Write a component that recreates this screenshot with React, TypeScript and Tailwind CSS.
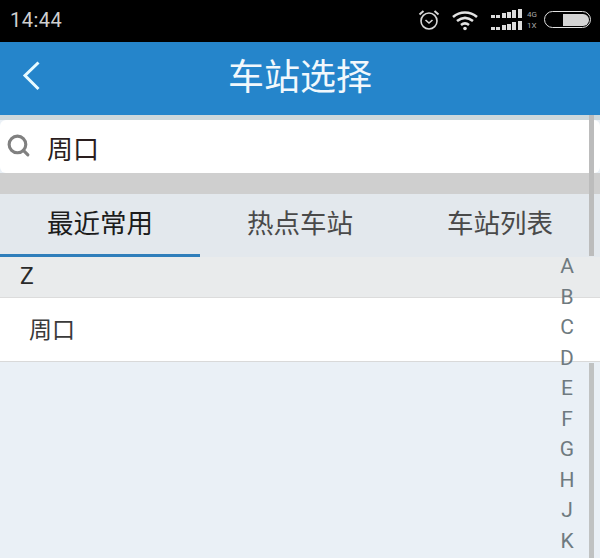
import { Search } from "lucide-react";

const cjk = "font-['Roboto','Noto_Sans_CJK_SC',sans-serif]";
const letters = ["A", "B", "C", "D", "E", "F", "G", "H", "J", "K"];
const tabs = ["最近常用", "热点车站", "车站列表"];

function SignalBars() {
  return (
    <svg width="32" height="9" viewBox="0 0 32 9" fill="#dcdcdc">
      <rect x="0" y="6" width="4" height="3" />
      <rect x="5" y="6" width="4" height="3" />
      <rect x="11" y="4" width="4" height="5" />
      <rect x="16" y="3" width="4" height="6" />
      <rect x="21" y="1" width="4" height="8" />
      <rect x="27" y="0" width="4" height="9" />
    </svg>
  );
}

function StatusBar() {
  return (
    <div className="h-[42px] bg-black flex items-center justify-between pl-[10px] pr-[9px] font-['Roboto',sans-serif] text-[#cfcfcf]">
      <span className="text-[20px] tracking-[0.5px] -mt-[2px]">14:44</span>
      <div className="flex items-center -mt-[3px]">
        {/* alarm */}
        <svg width="24" height="24" viewBox="0 0 24 24" fill="none" stroke="#d8d8d8" strokeWidth="1.6" className="-ml-[2px]">
          <circle cx="12" cy="13" r="8" />
          <path d="M8.5 12l3.5 3 3.5-3" />
          <path d="M2.5 6.5L6.5 3M21.5 6.5L17.5 3" strokeWidth="2" />
        </svg>
        {/* wifi */}
        <svg width="28" height="22" viewBox="0 0 28 22" fill="none" stroke="#e2e2e2" strokeWidth="2.6" className="ml-[10px]">
          <path d="M2 8c7-6 17-6 24 0" />
          <path d="M6 12c5-4 11-4 16 0" />
          <path d="M10 16c2.500-2 5.500-2 8 0" />
          <circle cx="14" cy="19.500" r="1.800" fill="#e2e2e2" stroke="none" />
        </svg>
        <div className="flex flex-col gap-[3px] ml-[12px]">
          <SignalBars />
          <SignalBars />
        </div>
        <div className="flex flex-col text-[8px] leading-[11px] ml-[4px] w-[14px] text-[#a8a8a8]">
          <span>4G</span>
          <span>1X</span>
        </div>
        {/* battery */}
        <div className="ml-[3px] w-[47px] h-[17px] rounded-full border-[1.5px] border-[#e2e2e2] flex justify-end p-[1.500px]">
          <div className="w-[26px] h-full rounded-r-full bg-[#d4d4d4]" />
        </div>
      </div>
    </div>
  );
}

export default function App() {
  return (
    <div className={`relative w-[600px] h-[558px] overflow-hidden bg-[#eaf0f6] ${cjk}`}>
      <StatusBar />

      <header className="h-[73px] bg-[#2585cb] flex items-center justify-center relative">
        <svg
          width="20"
          height="30"
          viewBox="0 0 20 30"
          fill="none"
          stroke="#e8fbff"
          strokeWidth="3"
          className="absolute left-[22px] top-[19px]"
        >
          <path d="M16.500 1.500L3 14.500L16.500 28" />
        </svg>
        <h1 className="text-[36px] text-[#f2f8fc] -mt-[1px]">车站选择</h1>
      </header>

      <div className="h-[5px] bg-[#cdd8dc]" />
      <div className="h-[53px] bg-white rounded-[6px] flex items-center pl-[6px]">
        <Search className="w-[25px] h-[25px] text-[#808080] -mt-[2px]" strokeWidth={3} />
        <span className="ml-[16px] text-[26px] text-[#2a1e1e] mt-[8px]">周口</span>
      </div>
      <div className="h-[21px] bg-[#cfcfcf]" />

      <nav className="flex h-[63px] bg-[#e3e8ed]">
        {tabs.map((tab, i) => (
          <div
            key={tab}
            className={
              i === 0
                ? "flex-1 flex items-center justify-center text-[26.500px] text-[#1c1c1c] border-b-[3px] border-[#2f7ebb]"
                : "flex-1 flex items-center justify-center text-[26.500px] text-[#4a4a4a] pb-[3px]"
            }
          >
            {tab}
          </div>
        ))}
      </nav>

      <div className="h-[41px] bg-[#e9ebec] flex items-center pl-[20px] text-[23px] text-[#2a2a2a] border-b border-[#dcdcdc] font-['Roboto',sans-serif]">
        Z
      </div>
      <div className="h-[64px] bg-white flex items-center pl-[29px] text-[23px] text-[#3a3a3a] border-b border-[#d9d9d9] pt-[3px]">
        周口
      </div>

      <div className="absolute left-[589px] top-[115px] w-[5px] h-[141px] bg-[#bcbcbc]" />
      <div className="absolute left-[589px] top-[363px] w-[5px] h-[195px] bg-[#c0c2c2]" />

      {/* letter index */}
      <div className="absolute left-[552px] top-[251px] w-[30px] flex flex-col items-center text-[21px] leading-[30.500px] text-[#6f7a80] font-['Roboto',sans-serif]">
        {letters.map((letter) => (
          <span key={letter}>{letter}</span>
        ))}
      </div>
    </div>
  );
}
